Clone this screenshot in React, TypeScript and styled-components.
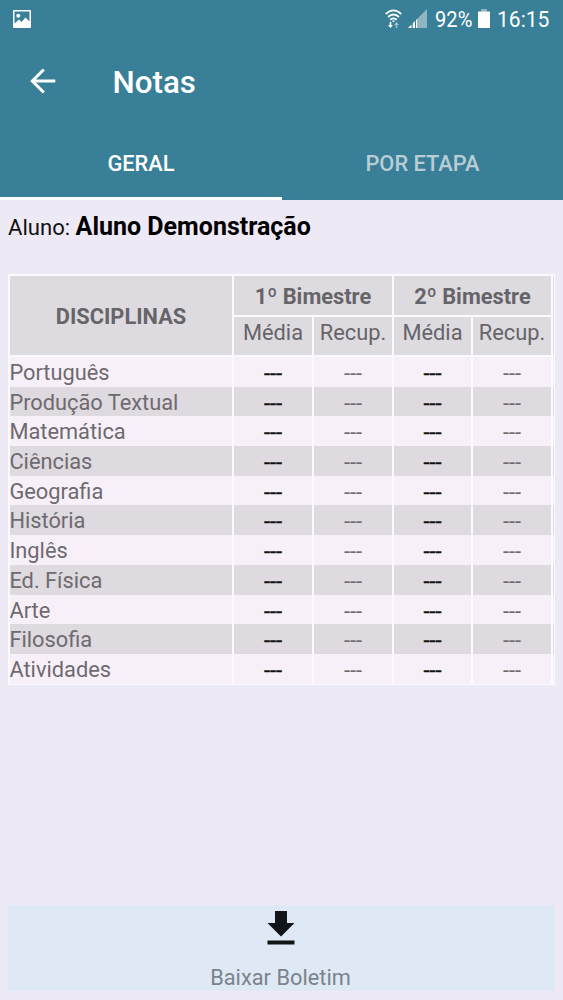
import React from 'react';
import styled, { createGlobalStyle } from 'styled-components';

const GlobalStyle = createGlobalStyle`
  * { box-sizing: border-box; }
  body { margin: 0; background: #eeeaf5; font-family: Roboto, "Noto Sans", sans-serif; }
`;

const Screen = styled.div`
  width: 563px;
  height: 1000px;
  display: flex;
  flex-direction: column;
  overflow: hidden;
  background: #eeeaf5;
`;

const Header = styled.header`
  height: 200px;
  flex: none;
  display: flex;
  flex-direction: column;
  background: #387f97;
  color: #fff;
`;

const StatusBar = styled.div`
  height: 40px;
  display: flex;
  align-items: center;
  padding: 0 14px 0 12px;
`;

const Spacer = styled.div`
  flex: 1;
`;

const StatusText = styled.span<{ $width: number; $scale: number }>`
  width: ${(p) => p.$width}px;
  margin-bottom: 2px;
  font-size: 22.5px;
  line-height: 38px;
  white-space: nowrap;
  transform: scaleX(${(p) => p.$scale});
  transform-origin: left;
`;

const StatusIcon = styled.svg<{ $gap?: number }>`
  display: block;
  flex: none;
  margin-bottom: 3px;
  margin-right: ${(p) => p.$gap ?? 0}px;
`;

const TitleBar = styled.div`
  height: 87px;
  display: flex;
  align-items: center;
  padding: 0 0 3px 29px;
`;

const Title = styled.h1`
  margin: 1px 0 0 55.5px;
  font-size: 31.3px;
  font-weight: 500;
  line-height: 40px;
`;

const Tabs = styled.nav`
  height: 73px;
  display: flex;
`;

const Tab = styled.div<{ $active?: boolean }>`
  width: ${(p) => (p.$active ? 282 : 281)}px;
  border-bottom: 3px solid ${(p) => (p.$active ? '#fff' : 'transparent')};
  color: ${(p) => (p.$active ? '#fff' : '#b9cdd5')};
  font-size: 21.8px;
  font-weight: 500;
  line-height: 73px;
  text-align: center;
`;

const Student = styled.p`
  margin: 0;
  height: 74px;
  padding: 11px 0 0 8px;
  font-size: 22.1px;
  line-height: 32px;
  color: #111;
  white-space: nowrap;
  b { font-size: 25px; font-weight: 700; color: #000; }
`;

const Table = styled.div`
  margin-left: 8px;
  width: 547px;
  height: 411px;
  padding: 2px 1px 1px 2px;
  display: grid;
  grid-template-columns: 222px 78px 78px 77px 78px 1px;
  grid-template-rows: 40px 41px repeat(11, 29.7px);
  column-gap: 2px;
  background: #fcfafe;
`;

const HeadCell = styled.div<{ $bold?: boolean; $cols?: number; $rows?: number }>`
  grid-column: span ${(p) => p.$cols ?? 1};
  grid-row: span ${(p) => p.$rows ?? 1};
  margin-bottom: ${(p) => (p.$rows === 2 || !p.$bold ? 2 : 1)}px;
  margin-top: ${(p) => (p.$bold ? 0 : 1)}px;
  display: flex;
  align-items: center;
  justify-content: center;
  padding-top: ${(p) => (p.$bold ? 2 : 0)}px;
  padding-bottom: ${(p) => (p.$bold ? 0 : 7)}px;
  background: #dedbe0;
  color: #666468;
  font-size: 21.8px;
  font-weight: ${(p) => (p.$bold ? 700 : 400)};
  white-space: nowrap;
`;

const Cell = styled.div<{ $shade: boolean; $name?: boolean; $strong?: boolean }>`
  background: ${(p) => (p.$shade ? '#dfd9e0' : '#f7f0f8')};
  color: ${(p) => (p.$strong ? '#111' : '#6e6a6f')};
  font-size: 21.8px;
  -webkit-text-stroke: ${(p) => (p.$strong ? '0.4px #111' : '0')};
  line-height: ${(p) => (p.$name ? 32.6 : 33.4)}px;
  text-indent: ${(p) => (p.$name ? -0.6 : 0)}px;
  height: 100%;
  overflow: hidden;
  text-align: ${(p) => (p.$name ? 'left' : 'center')};
  white-space: nowrap;
`;

const DownloadButton = styled.button`
  margin: auto 8px 9px;
  height: 86px;
  flex: none;
  display: flex;
  flex-direction: column;
  align-items: center;
  justify-content: flex-start;
  padding: 6px 1px 0 0;
  border: 0;
  background: #dfe9f6;
  color: #7b838b;
  font-family: inherit;
  font-size: 21.8px;
  line-height: 24px;
`;

const DownloadIcon = styled.svg`
  display: block;
  flex: none;
`;

const DownloadLabel = styled.span`
  margin-top: 21px;
  padding-right: 1px;
`;

const subjects = [
  'Português', 'Produção Textual', 'Matemática', 'Ciências', 'Geografia', 'História',
  'Inglês', 'Ed. Física', 'Arte', 'Filosofia', 'Atividades',
];

export default function App() {
  return (
    <Screen>
      <GlobalStyle />
      <Header>
        <StatusBar>
          <StatusIcon width="20" height="18" viewBox="0 0 20 18">
            <path fillRule="evenodd" fill="#fff" d="M2 0H18Q19 0 19 1V17Q19 18 18 18H2Q1 18 1 17V1Q1 0 2 0ZM2.5 1.5V13.5L7 9.5L9.5 12L13.5 7.5L17.5 11.5V1.5Z" />
            <circle cx="6.2" cy="5.8" r="2" fill="#fff" />
          </StatusIcon>
          <Spacer />
          <StatusIcon width="17" height="20" viewBox="0 0 17 20" fill="none" $gap={6}>
            <path d="M.7 5Q8.5-2.2 16.3 5M3 8Q8.5 3 14 8M5.2 10.8Q8.5 8 11.8 10.8" stroke="#fff" strokeWidth="1.8" />
            <path d="M6.8 11.5H10.2L8.5 13.5Z" fill="#fff" />
            <path d="M4.7 13H6.3V16H8L5.5 19L3 16H4.7Z" fill="#fff" />
            <path d="M10.7 19H12.3V16H14L11.5 13L9 16H10.7Z" fill="#9fc0cc" />
          </StatusIcon>
          <StatusIcon width="19" height="19" viewBox="0 0 19 19" $gap={8}>
            <path d="M10 9L19 0V19H10Z" fill="#8fb5c3" />
            <path d="M0 19L3.5 15.5V19ZM4.8 19V14.2L7 12V19ZM8 19V11L9.5 9.5V19Z" fill="#fff" />
          </StatusIcon>
          <StatusText $width={43} $scale={0.895}>92%</StatusText>
          <StatusIcon width="12" height="19" viewBox="0 0 12 19" $gap={7}>
            <path d="M3 0H9V3H3Z" fill="#8fb5c3" />
            <path d="M0 2.5H12V19H0Z" fill="#fff" />
          </StatusIcon>
          <StatusText $width={52} $scale={0.935}>16:15</StatusText>
        </StatusBar>
        <TitleBar>
          <StatusIcon width="28" height="26" viewBox="0 0 28 26" fill="none" stroke="#fff" strokeWidth="3">
            <path d="M26.3 13H3.3M14.8 1.5L3.3 13L14.8 24.5" />
          </StatusIcon>
          <Title>Notas</Title>
        </TitleBar>
        <Tabs>
          <Tab $active>GERAL</Tab>
          <Tab>POR ETAPA</Tab>
        </Tabs>
      </Header>

      <Student>Aluno: <b>Aluno Demonstração</b></Student>

      <Table>
        <HeadCell $bold $rows={2}>DISCIPLINAS</HeadCell>
        <HeadCell $bold $cols={2}>1º Bimestre</HeadCell>
        <HeadCell $bold $cols={2}>2º Bimestre</HeadCell>
        <HeadCell $bold $rows={2} />
        <HeadCell>Média</HeadCell>
        <HeadCell>Recup.</HeadCell>
        <HeadCell>Média</HeadCell>
        <HeadCell>Recup.</HeadCell>
        {subjects.map((name, i) => {
          const shade = i % 2 === 1;
          return (
            <React.Fragment key={name}>
              <Cell $shade={shade} $name>{name}</Cell>
              <Cell $shade={shade} $strong>---</Cell>
              <Cell $shade={shade}>---</Cell>
              <Cell $shade={shade} $strong>---</Cell>
              <Cell $shade={shade}>---</Cell>
              <Cell $shade={shade} />
            </React.Fragment>
          );
        })}
      </Table>

      <DownloadButton>
        <DownloadIcon width="28" height="34" viewBox="0 0 28 34" fill="#111518">
          <path d="M8 0H20V12H27.5L14 25.5L.5 12H8ZM.5 29.5H27.5V33.5H.5Z" />
        </DownloadIcon>
        <DownloadLabel>Baixar Boletim</DownloadLabel>
      </DownloadButton>
    </Screen>
  );
}
